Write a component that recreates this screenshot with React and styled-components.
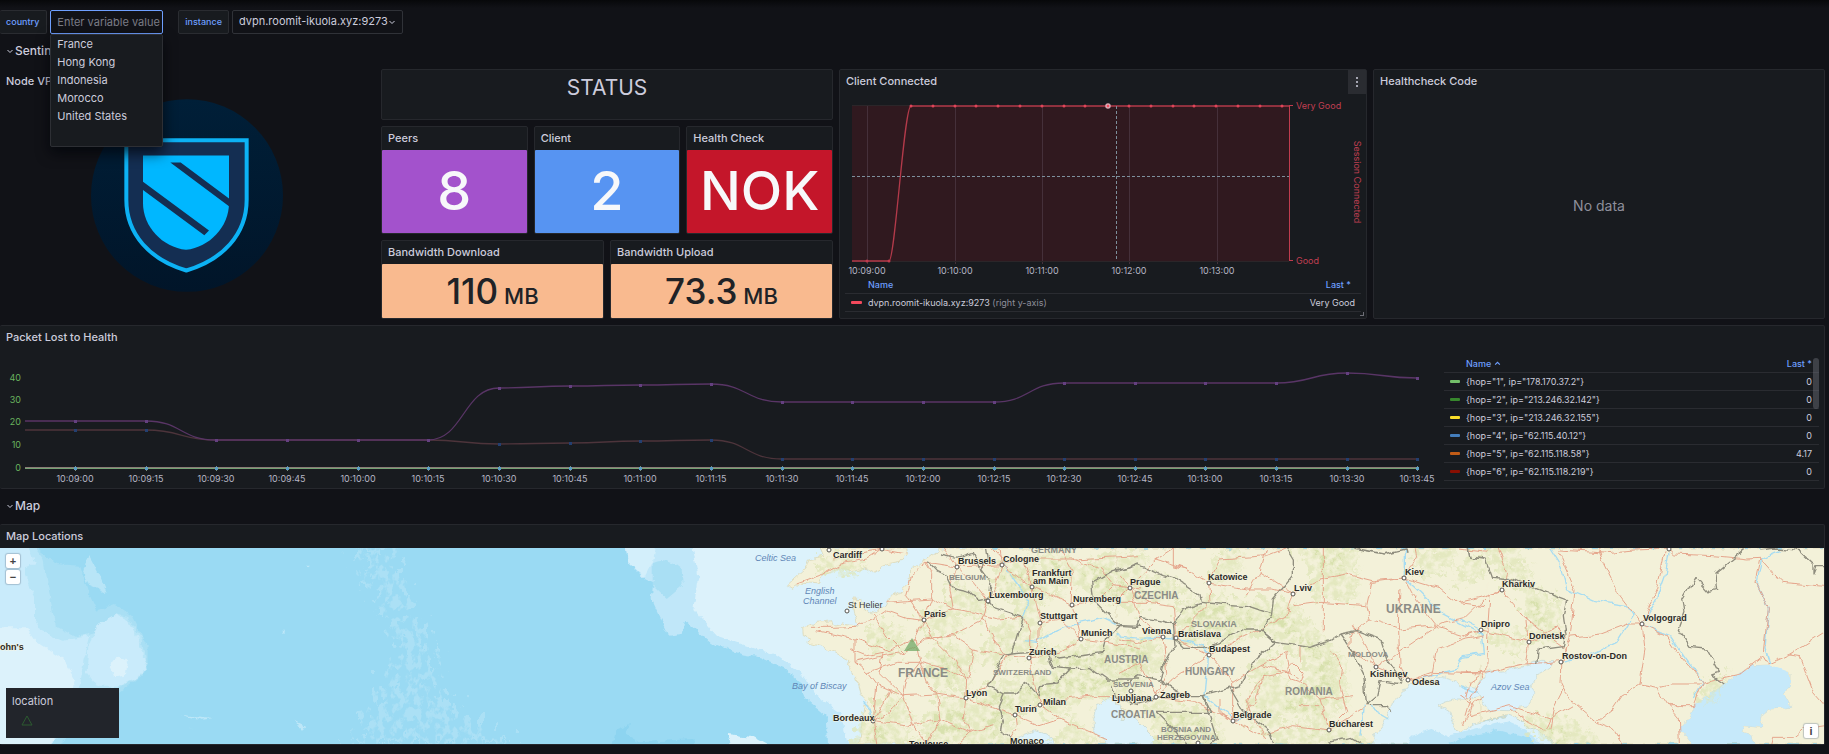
import React from "react";
import styled, { createGlobalStyle, css } from "styled-components";

const GlobalStyle = createGlobalStyle`
  *, *::before, *::after { box-sizing: border-box; }
  body {
    margin: 0;
    background: #111217;
    color: #ccccdc;
    font-family: Inter, "Liberation Sans", sans-serif;
    font-size: 11px;
    line-height: 16px;
  }
`;

const Page = styled.div`
  padding: 0 4px 7px 0;
  background: linear-gradient(#07080a, #111217 8px);
`;

/* ---------- variable toolbar ---------- */

const Toolbar = styled.div`
  display: flex;
  gap: 15px;
  padding-top: 10px;
`;

const Variable = styled.div`
  position: relative;
  display: flex;
  gap: 3px;
`;

const VariableLabel = styled.label`
  height: 24px;
  padding: 0 6px;
  border: 1px solid #2a2c31;
  border-left-width: ${(p) => (p.$flush ? 0 : "1px")};
  padding-right: ${(p) => (p.$flush ? 7 : 6)}px;
  border-radius: 2px;
  background: #181b1f;
  color: #6e9fff;
  font-size: 9px;
  font-weight: 500;
  line-height: 22px;
`;

const field = css`
  height: 24px;
  border: 1px solid #303238;
  border-radius: 2px;
  background: #111217;
  color: #ccccdc;
  font: 400 11px Inter, "Liberation Sans", sans-serif;
`;

const VariableInput = styled.input`
  ${field}
  width: 113px;
  padding: 0 0 0 6px;
  border-color: #6e9fff;
  outline: none;
  &::placeholder { color: #7b7c86; opacity: 1; }
`;

const SelectWrap = styled.div`
  position: relative;
  svg {
    position: absolute;
    right: 8px;
    top: 9px;
    pointer-events: none;
  }
`;

const VariableSelect = styled.select`
  ${field}
  width: 171px;
  padding: 0 4px 2px 6px;
  appearance: none;
`;

const Options = styled.ul`
  position: absolute;
  z-index: 5;
  top: 24px;
  right: 0;
  width: 113px;
  height: 113px;
  margin: 0;
  padding: 0;
  border: 1px solid #2d2f34;
  border-radius: 2px;
  background: #181b1f;
  box-shadow: 0 6px 14px rgba(1, 4, 9, 0.75);
  list-style: none;
`;

const Option = styled.li`
  padding: 0 6px;
  line-height: 18px;
`;

/* ---------- dashboard rows and panels ---------- */

const RowTitle = styled.h2`
  display: flex;
  align-items: center;
  gap: 2px;
  height: 35px;
  margin: 0;
  padding: 0 0 2px 7px;
  font-size: 12px;
  font-weight: 500;
`;

const Dashboard = styled.div`
  display: grid;
  grid-template-columns: 375fr 452fr 528fr 452fr;
  gap: 6px;
`;

const Panel = styled.section`
  position: relative;
  display: flex;
  flex-direction: column;
  min-width: 0;
  border: 1px solid ${(p) => (p.$clear ? "transparent" : "#26282d")};
  border-left-width: ${(p) => (p.$edge ? 0 : "1px")};
  border-radius: 2px;
  background: ${(p) => (p.$clear ? "transparent" : "#181b1f")};
`;

const WidePanel = styled(Panel)`
  grid-column: 1 / -1;
`;

const PanelTitle = styled.h3`
  flex: none;
  height: 23px;
  margin: 0;
  padding: 0 6px;
  font-size: 11px;
  font-weight: 500;
  line-height: 23px;
`;

const LogoBody = styled.div`
  display: flex;
  justify-content: center;
  padding-top: 6px;
`;

const StatusStack = styled.div`
  display: grid;
  grid-template-rows: 51px 108px 79px;
  gap: 6px;
`;

const StatGroup = styled.div`
  display: grid;
  grid-auto-flow: column;
  grid-auto-columns: 1fr;
  gap: 6px;
`;

const StatusText = styled.h1`
  margin: 4px 0 0;
  font-size: 21px;
  font-weight: 400;
  line-height: 28px;
  text-align: center;
`;

const StatValue = styled.div`
  display: flex;
  flex: 1;
  align-items: baseline;
  justify-content: center;
  gap: 6px;
  border-radius: 1px;
  background: ${(p) => p.$bg};
  color: ${(p) => (p.$dark ? "#202226" : "#f7f8fa")};
  font-size: ${(p) => (p.$dark ? 35 : 54)}px;
  font-weight: 500;
  line-height: ${(p) => (p.$dark ? 54 : 82)}px;
  small { font-size: 22px; line-height: 28px; }
`;

const MenuButton = styled.button`
  position: absolute;
  top: 0;
  right: 0;
  display: flex;
  align-items: center;
  justify-content: center;
  width: 18px;
  height: 24px;
  padding: 0;
  border: 0;
  background: #2a2c31;
`;

const ResizeHandle = styled.span`
  position: absolute;
  right: 2px;
  bottom: 2px;
  width: 4px;
  height: 4px;
  border: solid #6d6e76;
  border-width: 0 1px 1px 0;
`;

const NoData = styled.p`
  display: flex;
  flex: 1;
  align-items: center;
  justify-content: center;
  margin: 0;
  color: #8e8f9b;
  font-size: 14px;
`;

const ChartSvg = styled.svg`
  display: block;
  width: 100%;
  height: auto;
  min-width: 0;
  font-family: Inter, "Liberation Sans", sans-serif;
  font-size: 9px;
`;

const Legend = styled.table`
  margin: 0 5px;
  border-collapse: collapse;
  font-size: 9px;
  line-height: 17px;
  tr { border-bottom: 1px solid #2a2c31; }
  th, td { height: 17px; padding: 0; text-align: left; font-weight: 400; white-space: nowrap; }
  th { color: #6e9fff; font-weight: 500; }
  th:first-child, td:first-child { width: ${(p) => (p.$scroll ? 22 : 23)}px; padding-left: 6px; }
  th:last-child, td:last-child { padding-right: ${(p) => (p.$scroll ? 7 : 6)}px; text-align: right; }
  th:last-child { padding-right: ${(p) => (p.$scroll ? 7 : 10)}px; }
`;

const Muted = styled.span`
  color: #8e8f9b;
`;

const Swatch = styled.span`
  display: block;
  width: ${(p) => p.$w || 10}px;
  height: 3px;
  border-radius: 1px;
  background: ${(p) => p.$c};
`;

const PacketBody = styled.div`
  display: flex;
  align-items: flex-start;
`;

const PacketChart = styled.div`
  flex: 1;
  min-width: 0;
`;

const PacketLegend = styled.div`
  position: relative;
  flex: 0 0 375px;
  margin: 6px 5px 0 0;
  table { width: 100%; margin: 0; }
`;

const ScrollThumb = styled.div`
  position: absolute;
  top: 3px;
  right: 0;
  width: 6px;
  height: 51px;
  border-radius: 3px;
  background: rgba(120, 122, 132, 0.4);
`;

/* ---------- map ---------- */

const MapFrame = styled.div`
  position: relative;
  height: 196px;
  overflow: hidden;
  background: #9adaf3;
`;

const MapSvg = styled.svg`
  display: block;
  width: 100%;
  height: 100%;
  font-family: "Liberation Sans", sans-serif;
`;

const ZoomControls = styled.div`
  position: absolute;
  top: 6px;
  left: 6px;
  display: flex;
  flex-direction: column;
  gap: 2px;
`;

const MapButton = styled.button`
  display: block;
  width: 14px;
  height: 14px;
  padding: 0;
  border: 0;
  border-radius: 2px;
  background: #fff;
  box-shadow: 0 0 1px 1px rgba(110, 130, 150, 0.4);
  color: #444;
  font: 700 11px/14px "Liberation Sans", sans-serif;
  text-align: center;
`;

const InfoButton = styled(MapButton)`
  position: absolute;
  right: 6px;
  bottom: 6px;
`;

const MapLegend = styled.div`
  position: absolute;
  bottom: 6px;
  left: 6px;
  width: 113px;
  height: 50px;
  padding: 5px 6px;
  background: #22252b;
  svg { display: block; margin: 6px 0 0 9px; }
`;

const Chevron = ({ size = 6, up = false }) => (
  <svg width={size} height={size} viewBox="0 0 6 6" fill="none" stroke="currentColor" strokeWidth="1" aria-hidden="true">
    <path d={up ? "M1 4 3 2 5 4" : "M.5 2 3 4.5 5.5 2"} />
  </svg>
);

function Logo() {
  return (
    <svg width="192" height="193" viewBox="274 298 576 578" role="img" aria-label="Sentinel shield">
      <defs>
        <linearGradient id="disc" x2="0" y2="1">
          <stop offset="0" stopColor="#001f38" />
          <stop offset="1" stopColor="#011529" />
        </linearGradient>
      </defs>
      <ellipse cx="562" cy="587" rx="288" ry="289" fill="url(#disc)" />
      <path d="M380 421H741V600C741 705 668 780 560 812 452 780 380 705 380 600Z" fill="#142e52" stroke="#0cb2f5" strokeWidth="12" />
      <path d="M430 467H688V610C688 680 630 742 559 750 488 742 430 680 430 610Z" fill="#00b7ff" />
      <path d="M429 545 628 692 614 706 429 570ZM512 488H543L689 597V620Z" fill="#142e52" />
    </svg>
  );
}

const smooth = (pts) =>
  pts.reduce((d, [x, y], i) => {
    if (!i) return `M${x} ${y}`;
    const [px, py] = pts[i - 1];
    const m = (px + x) / 2;
    return `${d}C${m} ${py} ${m} ${y} ${x} ${y}`;
  }, "");

const clientTimes = [[867, "10:09:00"], [955, "10:10:00"], [1042, "10:11:00"], [1129, "10:12:00"], [1217, "10:13:00"]];

function ClientChart() {
  const xs = Array.from({ length: 18 }, (_, i) => Math.round(911 + i * 21.8));
  const curve = "M852 261H889C895 261 904 106 911 106H1289";
  return (
    <ChartSvg viewBox="840 93 526 183">
      <path d="M852 106H1289V261H852Z" fill="#30191f" />
      {clientTimes.map(([x, t]) => (
        <g key={t}>
          <path d={`M${x + 0.5} 106V264`} stroke="#45303a" strokeWidth="1" />
          <text x={x} y="274" textAnchor="middle" fill="#b6b6c4">{t}</text>
        </g>
      ))}
      <path d="M852 261.5H1289M852 105.5H911" stroke="#2b2629" />
      <path d={curve} fill="none" stroke="#b33a4a" strokeWidth="1.3" />
      <path d="M1289.5 105V261M1289 105.5H1293M1289 260.5H1293" stroke="#c03c4e" fill="none" />
      {xs.map((x) => <circle key={x} cx={x} cy="106" r="1.5" fill="#e04559" />)}
      <circle cx="867" cy="261" r="1.5" fill="#c03c4e" />
      <circle cx="889" cy="261" r="1.5" fill="#c03c4e" />
      <path d="M852 176.5H1289M1116.5 106V261" stroke="#7d8f9c" strokeDasharray="3 2" fill="none" />
      <circle cx="1108" cy="106" r="2" fill="#f2495c" stroke="#d9a9b4" strokeWidth="1.5" />
      <g fill="#c03f52">
        <text x="1296" y="109">Very Good</text>
        <text x="1296" y="264">Good</text>
        <text transform="translate(1354 182) rotate(90)" textAnchor="middle">Session Connected</text>
      </g>
    </ChartSvg>
  );
}

const packetTimes = [
  [75, "10:09:00"], [146, "10:09:15"], [216, "10:09:30"], [287, "10:09:45"], [358, "10:10:00"],
  [428, "10:10:15"], [499, "10:10:30"], [570, "10:10:45"], [640, "10:11:00"], [711, "10:11:15"],
  [782, "10:11:30"], [852, "10:11:45"], [923, "10:12:00"], [994, "10:12:15"], [1064, "10:12:30"],
  [1135, "10:12:45"], [1205, "10:13:00"], [1276, "10:13:15"], [1347, "10:13:30"], [1417, "10:13:45"],
];
const upperSeries = [421, 421, 440, 440, 440, 440, 388, 386, 385, 384, 402, 402, 402, 402, 383, 383, 383, 383, 373, 378];
const lowerSeries = [430, 430, 440, 440, 440, 440, 444, 443, 441, 440, 459, 459, 459, 459, 459, 459, 459, 459, 459, 459];

function LossChart() {
  const points = (ys) => packetTimes.map(([x], i) => [x, ys[i]]);
  const line = (ys) => smooth([[25, ys[0]], ...points(ys)]);
  return (
    <ChartSvg viewBox="0 349 1444 139">
      <g fill="#68b35e" textAnchor="end">
        {[[40, 381], [30, 403], [20, 425], [10, 448], [0, 471]].map(([v, y]) => <text key={v} x="21" y={y}>{v}</text>)}
      </g>
      <path d={line(lowerSeries)} fill="none" stroke="#4d343b" strokeWidth="1.3" />
      <path d={line(upperSeries)} fill="none" stroke="#593566" strokeWidth="1.3" />
      {points(lowerSeries).map(([x, y]) => <rect key={x} x={x - 1} y={y - 1} width="3" height="3" fill="#233f70" />)}
      {points(upperSeries).map(([x, y]) => <rect key={x} x={x - 1} y={y - 1} width="3" height="3" fill="#644080" />)}
      <path d="M25 467.5H1418" stroke="#8b7b76" />
      <path d="M25 468.5H1418" stroke="#75a375" />
      {packetTimes.map(([x, t]) => (
        <g key={t}>
          <path d={`M${x + 0.5} 466V471`} stroke="#79917f" />
          <rect x={x - 1} y="467" width="3" height="3" fill="#5a9cc4" />
          <text x={x} y="482" textAnchor="middle" fill="#b6b6c4">{t}</text>
        </g>
      ))}
    </ChartSvg>
  );
}

const hops = [
  ["#73bf69", "1", "178.170.37.2", "0"],
  ["#37872d", "2", "213.246.32.142", "0"],
  ["#fade2a", "3", "213.246.32.155", "0"],
  ["#447ebc", "4", "62.115.40.12", "0"],
  ["#c15c17", "5", "62.115.118.58", "4.17"],
  ["#890f02", "6", "62.115.118.219", "0"],
];

/* Map geometry is kept per tile, three units to the pixel. */
const west = {
  x: 2220,
  land: [
    "600,27 570,50 535,75 512,100 510,130 480,160 445,180 437,200 400,225 370,215 365,182 335,180 340,220 352,262 310,255 280,262 275,245 230,250 188,268 190,290 215,300 200,312 250,325 290,345 330,365 325,385 350,420 362,460 395,520 372,500 365,560 358,615 1200,615 1200,27",
    "240,27 250,52 205,60 195,90 140,140 160,152 185,130 240,135 255,100 310,90 350,95 375,85 400,98 430,80 480,70 503,45 500,27",
  ],
  sea: [
    "825,615 845,590 885,575 915,585 950,615",
    "1125,478 1105,475 1070,500 1058,540 1062,575 1100,615 1260,615 1235,590 1190,545 1170,515 1150,540 1135,500",
  ],
  hills: [
    "620,500 680,490 720,540 700,600 640,610 560,590 580,530", "760,450 880,430 1000,400 1190,380 1190,450 1000,470 940,520 880,480 790,560 820,615 740,615 720,520",
    "770,280 810,260 825,320 780,370 750,350", "850,220 890,210 900,300 860,320", "640,150 740,190 720,220 650,200", "780,90 860,80 940,160 860,190 790,150",
    "600,330 690,350 670,430 610,440 570,390", "370,560 440,550 500,600 480,615 360,615", "900,340 1190,330 1190,400 1000,410", "1010,110 1100,60 1190,60 1190,200 1080,170",
    "400,280 470,270 480,330 410,330", "240,80 320,60 370,75 300,90", "1000,560 1040,600 960,600", "560,240 640,220 650,260 580,270", "420,500 470,490 500,530 430,545", "920,60 980,50 1010,120 940,130",
  ],
  borders: [
    "565,68 590,95 625,110 645,150 690,160 720,185 744,180 760,205 850,235 830,300 815,345 790,350 770,390 745,440 790,465 775,500 790,540 785,575 815,600",
    "744,180 750,130 720,90 745,60 740,27", "600,45 650,55 700,40 720,90",
    "815,345 870,340 920,340 940,385 990,390 950,435 900,440 895,470 860,430 820,465 790,465",
    "920,340 960,360 1090,340 1100,300 1140,260 1060,180 1055,130 1120,95 1200,75", "990,390 1050,385 1100,420 1200,420", "1115,440 1130,480 1200,500", "1140,260 1200,262",
  ],
  roads: [
    "551,244 500,238 437,215 400,240 350,262 280,265 210,265", "551,244 575,180 575,100 560,70", "551,244 500,170 520,100 560,70 652,84", "551,244 640,210 700,220 770,240 850,235",
    "551,244 580,300 640,360 680,420 677,478", "551,244 525,300 450,335 345,300 230,275", "525,300 540,370 500,420 490,470 450,520 400,545", "490,470 520,560 560,615",
    "345,300 345,370 380,400 410,440 400,545 410,615", "345,370 430,350 490,340 560,300 640,290 700,330 800,350", "677,478 670,540 690,580 650,615", "677,478 740,445 800,350",
    "677,478 590,465 490,470 410,435", "677,478 740,500 800,520 825,528 900,498 960,540 1030,570 1100,600", "900,498 880,420 868,357 900,300 900,251 875,144 787,77 652,84",
    "875,144 940,170 996,197 1023,300 1100,310 1200,330", "996,197 1000,100 960,27", "744,186 700,130 652,84 610,27", "744,186 730,240 640,285 580,300", "787,77 850,60 1000,60 1200,50",
    "640,210 630,150 652,84", "400,225 440,290 490,340", "380,400 470,370 540,370 620,390 680,420", "590,465 600,540 560,615", "430,340 420,400 490,470", "700,330 690,400 680,420",
    "800,350 868,357 960,340 1023,300", "730,240 760,300 800,350", "520,560 600,540 690,580 760,560", "400,545 520,560", "850,235 870,280 868,357", "996,197 1080,180 1120,140 1200,150",
    "440,190 500,185 575,180 640,210", "780,27 787,77 770,130 744,186", "760,27 790,60", "900,251 960,240 1023,300", "1000,60 1080,90 1120,140", "280,60 320,50 425,31 500,45", "170,135 240,110 300,75 380,60 425,31",
    "900,498 980,480 1060,470 1110,470", "825,528 830,570 810,600", "825,528 900,560 960,540", "450,450 430,500 400,545", "540,370 560,430 590,465", "330,330 380,350 430,340", "850,60 875,144",
  ],
  rivers: ["790,70 820,120 850,160 865,200 850,240", "850,305 890,310 950,275 1020,250 1090,235 1140,260", "370,490 390,510 400,545"],
  dots: [[267, 33], [425, 31], [652, 84], [787, 77], [875, 144], [744, 186], [996, 197], [321, 216], [551, 244], [900, 251], [1023, 300], [868, 357], [677, 478], [900, 498], [825, 528], [400, 545]],
};

const central = {
  x: 3360,
  land: ["-10,27 1092,27 1092,615 100,615 60,575 40,545 25,515 -10,510"],
  sea: [
    "758,615 765,585 790,555 805,520 815,490 850,460 870,435 900,425 940,420 965,415 1000,425 1030,440 1080,450 1080,470 1050,480 1010,480 975,490 955,500 990,520 1005,570 1025,577 1060,555 1110,543 1165,527 1200,540 1220,560 1260,580 1305,615",
  ],
  hills: [
    "440,190 520,220 600,310 660,360 670,480 600,530 480,510 470,470 560,460 590,380 540,330 440,270", "190,210 300,190 440,220 430,270 330,290 200,300", "0,310 100,300 120,370 60,420 0,430",
    "100,510 270,530 300,615 130,615", "400,480 470,500 470,560 400,540", "540,27 700,30 690,110 610,100", "410,390 450,370 490,440 440,460", "60,130 120,120 180,160 100,170", "0,60 60,70 40,110 0,120", "600,120 700,130 690,170 600,160", "900,60 990,40 980,80 920,90", "300,60 350,50 340,90 290,100", "470,590 620,560 700,600 560,615",
  ],
  borders: [
    "-10,95 50,75 130,110 165,120 240,170 245,190 190,210 160,255 120,245 60,235 50,265 -10,262", "245,190 300,195 380,200 455,225 460,180 520,110 520,60 500,27",
    "160,255 165,320 130,380 120,425 195,470 250,470 360,440 400,370 465,310 420,270 370,270 300,310 250,325 190,325 165,300", "455,225 425,275 465,310 570,325 630,305 660,285 710,275 780,300 800,360 850,430",
    "660,285 700,340 730,400 740,500 800,500 815,515", "735,500 770,470 780,425 850,435", "250,470 275,520 110,520 160,570 200,615", "250,470 265,520 290,600 270,615", "330,450 365,510 410,545 450,580 460,615",
    "625,610 690,595 725,615", "700,27 790,45 855,30 858,45", "120,425 60,410 0,440", "190,470 100,480 30,500", "1045,27 1050,55 1092,60",
  ],
  roads: [
    "30,147 110,60 160,27", "30,147 0,110", "30,147 90,190 160,200 167,298", "30,147 -20,197", "110,60 200,90 266,132", "160,27 160,80 200,90", "266,132 380,150 460,150 520,165 600,120 680,105 760,125 853,117", "266,132 300,60 440,50 500,27", "266,132 270,190 230,230 167,298",
    "520,165 500,230 440,260 266,348", "520,200 600,190 740,200 755,130 853,117", "610,27 610,280", "129,294 60,240 30,147", "167,298 266,348 338,430 338,546", "108,474 140,400 129,294", "108,474 160,420 266,348", "108,474 220,490 338,546 400,500 430,410 500,400",
    "338,546 420,590 520,560 627,573 600,480 510,400 500,340 420,380", "627,573 680,520 660,440 665,380 630,330", "627,573 740,500", "600,480 700,470", "520,370 550,400 540,430 510,420 500,390 520,370", "853,117 880,170 950,260 840,270 750,240 740,200", "853,117 890,50 885,27", "853,117 960,150 1010,190 1092,200",
    "840,150 835,250 840,380 865,424", "750,240 690,290 690,330 768,384 820,350 940,270 960,255", "960,255 1030,240 1092,180", "950,265 1030,290 1092,275", "865,424 935,410 950,330 1040,300 1092,290", "865,424 935,400 1092,405", "700,260 768,384 865,424", "380,170 420,100 440,27", "338,430 420,380 510,400", "540,500 600,500", "0,300 60,310 129,294", "0,190 90,190", "300,480 300,530 338,546", "430,410 380,480 400,540 440,600", "540,320 540,370", "420,100 520,165", "1040,480 1050,430 1092,400", "0,400 60,370 110,470", "1092,470 1060,490 1030,560",
  ],
  rivers: ["-10,290 60,298 129,294 167,298 250,320 266,348 255,470 340,540 400,530", "853,27 853,117 900,160 960,220 1092,290", "730,500 720,590", "750,505 810,540", "1092,345 1030,355 1010,390 900,420"],
  dots: [[30, 147], [266, 132], [520, 165], [853, 117], [129, 294], [167, 298], [266, 348], [768, 384], [865, 424], [108, 474], [33, 456], [338, 546], [627, 573], [235, 613]],
};

const east = {
  x: 4380,
  land: ["60,27 1100,27 1100,615 285,615 240,580 200,560 180,540 140,528 60,548"],
  sea: [
    "60,430 80,400 140,395 200,380 245,367 280,368 270,385 235,405 215,440 225,465 195,505 145,515 85,513 60,475 50,450",
    "695,615 660,572 690,535 710,490 750,470 790,435 840,400 880,380 930,378 960,395 990,400 990,430 975,470 995,505 930,510 895,535 905,565 850,560 845,578 870,585 880,615",
  ],
  hills: ["190,545 270,550 330,560 400,615 290,615 240,575", "110,40 150,27 200,100 140,110", "30,70 70,60 60,100 10,110", "720,470 770,440 760,465", "200,150 290,200 280,280 230,290", "120,300 180,300 170,330"],
  borders: [
    "25,27 30,55 75,60 95,115 160,120 240,155 320,185 310,230 318,290 310,320 235,330 230,375",
    "860,27 800,75 765,105 770,155 745,160 705,115 668,180 675,220 655,275 690,325 740,330 778,400 755,408 790,432", "895,33 950,27 1020,35 1062,75 1062,105 1072,80 1095,80",
  ],
  roads: [
    "126,154 140,100 115,27", "126,154 90,165 85,240 80,400", "126,154 190,230 270,295 320,330 303,368", "0,190 60,175 126,154", "63,273 207,310 195,375", "0,300 63,273", "195,240 200,300", "207,310 290,265 320,300", "80,400 190,375 303,368", "0,402 80,400 30,480 15,530",
    "303,368 330,300 345,150 295,33", "330,295 420,285 500,255 546,255", "546,255 480,170 425,60 415,27", "546,255 590,150 615,40", "300,33 430,42 520,33 627,30 640,45 760,50 860,60 900,58", "546,255 555,330 540,435", "303,368 300,430 310,450 350,500 410,550 460,570 485,615", "540,435 490,465 460,510 415,545",
    "540,435 590,445 630,435 720,435", "590,445 625,500 655,535 658,615", "625,500 700,500 728,430", "728,430 660,350 620,290 546,255", "728,430 840,405 910,350 925,375", "925,375 990,345 1092,280", "990,345 1020,350 1060,460 1095,500", "900,58 885,130 925,210 910,340", "900,58 965,130 1095,142", "310,450 280,510 270,570", "0,470 40,500 30,530 150,500 270,540 340,500", "150,510 200,550 250,575", "0,30 80,40", "1095,560 1030,570 1000,595 940,595 935,615", "270,540 255,575",
  ],
  rivers: [
    "270,27 300,75 320,150 400,185 500,200 520,230 470,310 400,345 303,368", "627,40 615,110 590,180 546,255 630,290 670,350 728,430 700,480", "960,35 905,60 890,140 925,210 915,330 930,375", "0,240 63,273 70,340 10,350 0,370", "0,440 50,460",
  ],
  dots: [[126, 154], [63, 273], [207, 310], [303, 368], [546, 255], [627, 30]],
};

const tiles = [west, central, east];

const cities = [
  ["Cardiff", 833, 559], ["Brussels", 958, 565], ["Cologne", 1003, 563], ["Frankfurt", 1032, 577], ["am Main", 1033, 585], ["Luxembourg", 989, 599], ["Nuremberg", 1073, 603],
  ["Paris", 924, 618], ["Stuttgart", 1040, 620], ["Munich", 1081, 637], ["Zurich", 1029, 656], ["Lyon", 966, 697], ["Milan", 1043, 706], ["Turin", 1015, 713],
  ["Bordeaux", 833, 722], ["Toulouse", 909, 748], ["Monaco", 1010, 745], ["Prague", 1130, 586], ["Katowice", 1208, 581], ["Lviv", 1294, 592], ["Kiev", 1405, 576], ["Vienna", 1142, 635],
  ["Bratislava", 1178, 638], ["Budapest", 1209, 653], ["Kishinev", 1370, 678], ["Odesa", 1412, 686], ["Zagreb", 1160, 699], ["Ljubljana", 1112, 702], ["Belgrade", 1233, 719], ["Bucharest", 1329, 728],
  ["Kharkiv", 1502, 588], ["Dnipro", 1481, 628], ["Donetsk", 1529, 640], ["Rostov-on-Don", 1562, 660], ["Volgograd", 1643, 622], ["ohn's", 0, 651],
];

const countries = [
  ["GERMANY", 1031, 554, 9], ["BELGIUM", 949, 581, 8], ["CZECHIA", 1134, 600, 10], ["SLOVAKIA", 1191, 628, 9], ["UKRAINE", 1386, 614, 12], ["FRANCE", 898, 678, 12],
  ["SWITZERLAND", 993, 676, 8], ["AUSTRIA", 1104, 664, 10], ["HUNGARY", 1185, 676, 10], ["SLOVENIA", 1113, 688, 8], ["CROATIA", 1111, 719, 10], ["ROMANIA", 1285, 696, 10],
  ["MOLDOVA", 1348, 658, 8], ["BOSNIA AND", 1161, 733, 8], ["HERZEGOVINA", 1157, 741, 8],
];

const seas = [["Celtic Sea", 755, 562], ["English", 805, 595], ["Channel", 803, 605], ["Bay of Biscay", 792, 690], ["Azov Sea", 1491, 691]];

function Atlantic() {
  return (
    <g transform="translate(0 540) scale(.333333)">
      <g>
        <path d="M-20 10H95L165 75 240 80 265 160 290 215 345 195 395 230 440 320 440 395 360 460 150 640H-20Z" fill="#a9dff4" />
        <path d="M-20 10H90L130 60 155 200 165 260 230 295 300 275 345 225 385 235 425 300 440 395 360 445 160 500V640H-20Z" fill="#b8e5f7" />
        <path d="M-20 10H80L105 75 75 85 75 110 105 170V240L130 280 190 305 270 290 250 370 240 440 150 640H-20Z" fill="#c9ebfb" />
        <path d="M260 400 265 320 300 250 345 225 385 245 415 300 440 395 360 440 290 440Z" fill="#c9ebfb" />
        <path d="M-20 265 80 265 110 310 190 360 225 420 215 460 150 640H-20Z" fill="#dcf2fb" />
        <path d="M330 385Q350 330 380 370L375 410 345 418Z" fill="#dcf2fb" />
        <path d="M265 45 300 110 320 160 262 135 250 100Z" fill="#b8e5f7" />
      </g>
      <path d="M540 530 640 540 605 545ZM560 560 600 580 570 565ZM645 590 662 605ZM885 545 915 560 905 575ZM845 278H860L852 285ZM915 80H930L922 88Z" fill="#bde7f8" />
      <path d="M1830 640 1850 570 1890 555 1880 585 1920 610 2080 600 2090 640Z" fill="#8dd4f0" />
      <g transform="translate(2220 0)">
        <path d="M-345 10 -335 70 -290 115 -260 130 -265 180 -215 290 -175 285 -165 245 -90 310 0 345 60 355 130 385 180 430 200 480 260 530 265 640H700V10Z" fill="#c0e7f9" />
        <path d="M-345 10-335 70-285 115-262 70-250 10Z" fill="#d3effb" />
        <path d="M-262 70Q-220 50-175 90L-172 140-220 180-262 140Z" fill="#a9dff4" />
        <path d="M-145 10-125 110-140 210-70 290 20 320 110 350 180 400 230 470 300 520 330 640H700V10Z" fill="#dcf2fb" />
        <path d="M-40 585 40 595 120 640H-30Z" fill="#dcf2fb" />
      </g>
    </g>
  );
}

function WorldMap() {
  const group = (key, props) =>
    tiles.map((t) => (
      <g key={t.x} transform={`translate(${t.x} 0)`} {...props}>
        {t[key].map((p) => (props.fill === "none" ? <polyline key={p} points={p} /> : <polygon key={p} points={p} />))}
      </g>
    ));
  return (
    <MapSvg viewBox="0 549 1824 196" preserveAspectRatio="xMidYMid slice" role="img" aria-label="Map of Europe and the North Atlantic">
      <defs>
        <filter id="coast" x="-20" y="530" width="1870" height="234" filterUnits="userSpaceOnUse" primitiveUnits="userSpaceOnUse" colorInterpolationFilters="sRGB">
          <feTurbulence type="fractalNoise" baseFrequency="0.12" numOctaves="3" seed="4" />
          <feDisplacementMap in="SourceGraphic" scale="7" xChannelSelector="R" yChannelSelector="G" />
        </filter>
        <filter id="rough" x="-20" y="530" width="1870" height="234" filterUnits="userSpaceOnUse" primitiveUnits="userSpaceOnUse" colorInterpolationFilters="sRGB">
          <feTurbulence type="fractalNoise" baseFrequency="0.09" numOctaves="2" seed="8" />
          <feDisplacementMap in="SourceGraphic" scale="7" xChannelSelector="R" yChannelSelector="G" />
        </filter>
        <filter id="relief" x="0" y="540" width="1840" height="214" filterUnits="userSpaceOnUse" primitiveUnits="userSpaceOnUse" colorInterpolationFilters="sRGB">
          <feTurbulence type="fractalNoise" baseFrequency="0.15" numOctaves="4" seed="2" result="n" />
          <feDisplacementMap in="SourceGraphic" in2="n" scale="30" xChannelSelector="R" yChannelSelector="G" result="d" />
          <feColorMatrix in="n" type="matrix" values="0 0 0 0 0  0 0 0 0 0  0 0 0 0 0  3 0 0 0 -0.9" result="m" />
          <feComposite in="d" in2="m" operator="in" />
        </filter>
        <filter id="ridge" x="0" y="540" width="700" height="214" filterUnits="userSpaceOnUse" primitiveUnits="userSpaceOnUse" colorInterpolationFilters="sRGB">
          <feTurbulence type="fractalNoise" baseFrequency="0.14 0.1" numOctaves="4" seed="11" result="n" />
          <feDisplacementMap in="SourceGraphic" in2="n" scale="60" xChannelSelector="R" yChannelSelector="G" result="d" />
          <feColorMatrix in="n" type="matrix" values="0 0 0 0 0  0 0 0 0 0  0 0 0 0 0  0 7 0 0 -3.1" result="m" />
          <feComposite in="d" in2="m" operator="in" />
        </filter>
      </defs>
      <rect y="540" width="1824" height="214" fill="#9adaf3" />
      <g filter="url(#coast)">
        <Atlantic />
      </g>
      <g filter="url(#ridge)" fill="#abe0f5">
        <path d="M352 540H392L400 590 432 650 440 700 510 750H355L385 690 400 650 375 600Z" />
      </g>
      <g filter="url(#coast)">
        <g transform="translate(0 540) scale(.333333)">
          <g strokeLinejoin="round">{group("land", { fill: "#f3f1d9", stroke: "#d9d3ae", strokeWidth: 2 })}</g>
          <path d="M3350 27H3370V470H3350ZM4370 27H4460V380H4370Z" fill="#f3f1d9" />
          {group("sea", { fill: "#dcf2fb", stroke: "#c5d6cf", strokeWidth: 2 })}
          <path d="M4210 640 4235 590 4290 570 4340 590 4400 575 4520 545 4580 570 4640 640Z" fill="#bfe6f8" />
          <path d="M4300 640 4400 590 4500 575 4590 600 4620 640Z" fill="#a3ddf4" />
          <path d="M5075 615 5040 572 5070 535 5090 490 5130 470 5170 435 5220 400 5260 380 5310 378 5370 400 5370 430 5355 470 5375 505 5310 510 5275 535 5285 565 5230 560 5225 578 5250 585 5260 615Z" fill="#c6e9fa" />
        </g>
      </g>
      <g filter="url(#relief)" opacity=".75">
        <g transform="translate(0 540) scale(.333333)">{group("hills", { fill: "#d0dca0", stroke: "#dfe6b8", strokeWidth: 40 })}</g>
      </g>
      <g filter="url(#rough)" strokeLinejoin="round">
        <g transform="translate(0 540) scale(.333333)">
          {group("rivers", { fill: "none", stroke: "#a6dcf2", strokeWidth: 4 })}
          {group("roads", { fill: "none", stroke: "#e5a58c", strokeWidth: 3 })}
          {group("borders", { fill: "none", stroke: "#8f8d7e", strokeWidth: 4 })}
        </g>
      </g>
      {tiles.map((t) => t.dots.map(([x, y]) => (
        <circle key={`${t.x}-${x}-${y}`} cx={Math.round((t.x + x) / 3)} cy={Math.round(540 + y / 3)} r="2" fill="#fff" stroke="#55534c" />
      )))}
      <g fontWeight="700">
        {countries.map(([t, x, y, s]) => <text key={t} x={x} y={y} fontSize={s} fill="#8a8b86">{t}</text>)}
        {cities.map(([t, x, y]) => <text key={t} x={x} y={y} fontSize="9" fill="#2b2a27" stroke="#f7f5e2" strokeWidth="1" paintOrder="stroke">{t}</text>)}
      </g>
      <text x="848" y="609" fontSize="9" fill="#3c3c3a">St Helier</text>
      <g fontStyle="italic" fontSize="9" fill="#5f86b6">
        {seas.map(([t, x, y]) => <text key={t} x={x} y={y}>{t}</text>)}
      </g>
      <path d="M912 639 920 652H904Z" fill="#73a866" fillOpacity=".75" />
    </MapSvg>
  );
}

const options = ["France", "Hong Kong", "Indonesia", "Morocco", "United States"];
const stats = [["Peers", "8", "#a352cc"], ["Client", "2", "#5794f2"], ["Health Check", "NOK", "#c4162a"]];
const bandwidth = [["Bandwidth Download", "110"], ["Bandwidth Upload", "73.3"]];

export default function App() {
  return (
    <Page>
      <GlobalStyle />
      <Toolbar>
        <Variable>
          <VariableLabel htmlFor="country" $flush>country</VariableLabel>
          <VariableInput id="country" placeholder="Enter variable value" />
          <Options>
            {options.map((o) => <Option key={o}>{o}</Option>)}
          </Options>
        </Variable>
        <Variable>
          <VariableLabel htmlFor="instance">instance</VariableLabel>
          <SelectWrap>
            <VariableSelect id="instance" defaultValue="node">
              <option value="node">dvpn.roomit-ikuola.xyz:9273</option>
            </VariableSelect>
            <Chevron />
          </SelectWrap>
        </Variable>
      </Toolbar>

      <RowTitle><Chevron />Sentinel</RowTitle>
      <Dashboard>
        <Panel $clear $edge>
          <PanelTitle>Node VPN</PanelTitle>
          <LogoBody><Logo /></LogoBody>
        </Panel>

        <StatusStack>
          <Panel><StatusText>STATUS</StatusText></Panel>
          <StatGroup>
            {stats.map(([title, value, bg]) => (
              <Panel key={title}>
                <PanelTitle>{title}</PanelTitle>
                <StatValue $bg={bg}>{value}</StatValue>
              </Panel>
            ))}
          </StatGroup>
          <StatGroup>
            {bandwidth.map(([title, value]) => (
              <Panel key={title}>
                <PanelTitle>{title}</PanelTitle>
                <StatValue $bg="#f9ba8f" $dark>{value}<small>MB</small></StatValue>
              </Panel>
            ))}
          </StatGroup>
        </StatusStack>

        <Panel>
          <PanelTitle>Client Connected</PanelTitle>
          <MenuButton aria-label="Panel menu">
            <svg width="4" height="12" viewBox="0 0 4 12" fill="#a5a6b2"><path d="M1 1h2v2H1zM1 5h2v2H1zM1 9h2v2H1z" /></svg>
          </MenuButton>
          <ClientChart />
          <Legend>
            <thead><tr><th /><th>Name</th><th>Last *</th></tr></thead>
            <tbody>
              <tr>
                <td><Swatch $c="#f2495c" $w={11} /></td>
                <td>dvpn.roomit-ikuola.xyz:9273 <Muted>(right y-axis)</Muted></td>
                <td>Very Good</td>
              </tr>
            </tbody>
          </Legend>
          <ResizeHandle />
        </Panel>

        <Panel>
          <PanelTitle>Healthcheck Code</PanelTitle>
          <NoData>No data</NoData>
        </Panel>

        <WidePanel $edge>
          <PanelTitle>Packet Lost to Health</PanelTitle>
          <PacketBody>
            <PacketChart><LossChart /></PacketChart>
            <PacketLegend>
              <Legend $scroll>
                <thead><tr><th /><th>Name <Chevron up size={7} /></th><th>Last *</th></tr></thead>
                <tbody>
                  {hops.map(([color, hop, ip, last]) => (
                    <tr key={hop}>
                      <td><Swatch $c={color} /></td>
                      <td>{`{hop="${hop}", ip="${ip}"}`}</td>
                      <td>{last}</td>
                    </tr>
                  ))}
                </tbody>
              </Legend>
              <ScrollThumb />
            </PacketLegend>
          </PacketBody>
        </WidePanel>
      </Dashboard>

      <RowTitle><Chevron />Map</RowTitle>
      <Panel $edge>
        <PanelTitle>Map Locations</PanelTitle>
        <MapFrame>
          <WorldMap />
          <ZoomControls>
            <MapButton aria-label="Zoom in">+</MapButton>
            <MapButton aria-label="Zoom out">−</MapButton>
          </ZoomControls>
          <MapLegend>
            location
            <svg width="12" height="11" viewBox="0 0 12 11" fill="none" stroke="#2c5a30"><path d="M6 1 11 10H1Z" /></svg>
          </MapLegend>
          <InfoButton aria-label="Attributions">i</InfoButton>
        </MapFrame>
      </Panel>
    </Page>
  );
}
